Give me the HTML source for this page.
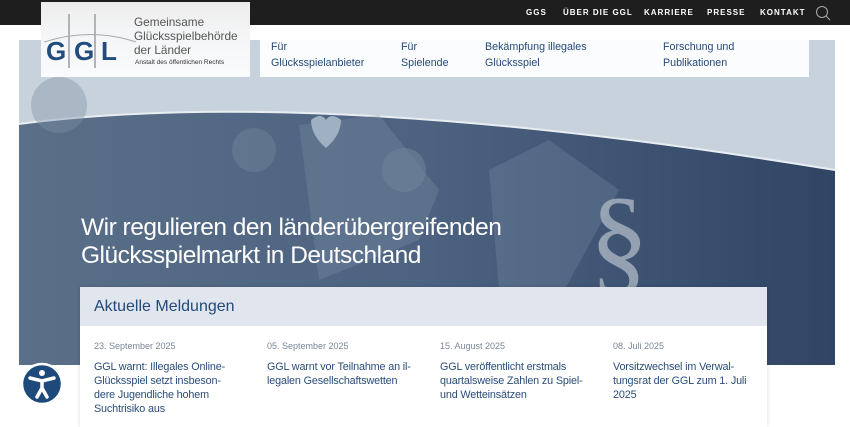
<!DOCTYPE html>
<html><head><meta charset="utf-8"><style>
*{margin:0;padding:0;box-sizing:border-box}
body{width:850px;height:422px;overflow:hidden;background:#fff;font-family:"Liberation Sans",sans-serif;position:relative}
.top{position:absolute;left:0;top:0;width:850px;height:25px;background:#1e1e1e}
.top span{position:absolute;top:8px;color:#fff;font-size:8px;font-weight:bold;letter-spacing:1px}
.hero{position:absolute;left:19px;top:40px;width:816px;height:325px;overflow:hidden;background:#c8d2dc}
.logo{position:absolute;left:41px;top:2px;width:209px;height:75px;background:linear-gradient(#ececec,#f4f5f6 40%,#fafbfc)}
.nav{position:absolute;left:260px;top:40px;width:549px;height:37px;background:#fbfcfd}
.nav div{position:absolute;top:0;color:#234a78;font-size:10.7px;line-height:15.5px;white-space:nowrap}
.card{position:absolute;left:80px;top:287px;width:687px;height:140px;background:#fff;box-shadow:0 0 4px rgba(0,0,0,.15)}
.card h2{height:39px;background:#e1e6ee;color:#234a78;font-size:16px;font-weight:normal;padding:11px 0 0 14px}
.col{position:absolute;top:54px;width:160px;white-space:nowrap}
.d{color:#7a8799;font-size:9px}
.t{color:#2a4d7a;font-size:10.8px;line-height:14px;margin-top:9px;letter-spacing:-.15px}
.h1{position:absolute;left:81px;top:214px;color:#fff;font-size:24.5px;line-height:28px;letter-spacing:-.5px;white-space:nowrap}
</style></head><body>
<div class="top">
<span style="left:526px">GGS</span><span style="left:563px">ÜBER DIE GGL</span><span style="left:644px">KARRIERE</span><span style="left:707px">PRESSE</span><span style="left:760px">KONTAKT</span>
<svg style="position:absolute;left:815px;top:5px" width="16" height="16"><circle cx="7" cy="7" r="5.5" fill="none" stroke="#aaa" stroke-width="1"/><line x1="11" y1="11" x2="15" y2="15" stroke="#aaa"/></svg>
</div>
<div class="hero">
<svg width="816" height="325" style="position:absolute;left:0;top:0">
<defs><linearGradient id="g" x1="0" x2="1"><stop offset="0" stop-color="#5a6f88"/><stop offset=".5" stop-color="#4c6280"/><stop offset="1" stop-color="#2f4563"/></linearGradient></defs>
<path d="M0 84 Q300 45 816 130 L816 325 L0 325Z" fill="url(#g)"/>
<path d="M0 84 Q300 45 816 130" fill="none" stroke="#e8edf2" stroke-width="2"/>
<path d="M280 85 L360 75 L420 150 L400 200 L300 240Z" fill="#8294aa" opacity=".3"/>
<path d="M292 80 q10-8 15 0 q5-8 15 0 q0 15 -15 28 q-15-13-15-28z" fill="#9fb0c3"/>
<circle cx="385" cy="130" r="22" fill="#6f8299" opacity=".6"/>
<circle cx="235" cy="110" r="22" fill="#6f8299" opacity=".5"/>
<circle cx="40" cy="65" r="28" fill="#7e90a6" opacity=".4"/>
<path d="M470 130 L530 100 L600 150 L540 260 L480 250Z" fill="#7c8fa6" opacity=".3"/>
<text x="570" y="240" font-size="120" font-family="Liberation Serif" fill="#a9b5c2" opacity=".8">§</text>
</svg>
</div>
<div class="logo">
<svg width="100" height="75" style="position:absolute;left:0;top:0">
<path d="M3 40 Q50 25 95 40" fill="none" stroke="#aaa" stroke-width="1"/>
<rect x="27" y="12" width="2" height="54" fill="#b0b4b8"/><rect x="53" y="12" width="2" height="54" fill="#b0b4b8"/>
<text x="5" y="58" font-size="26" font-weight="bold" fill="#214c7d" font-family="Liberation Sans">G</text>
<text x="33" y="58" font-size="26" font-weight="bold" fill="#214c7d" font-family="Liberation Sans">G</text>
<text x="60" y="58" font-size="26" font-weight="bold" fill="#214c7d" font-family="Liberation Sans">L</text>
</svg>
<div style="position:absolute;left:93px;top:13px;color:#555;font-size:11.8px;line-height:14px;white-space:nowrap">Gemeinsame<br>Glücksspielbehörde<br>der Länder</div>
<div style="position:absolute;left:94px;top:57px;color:#333;font-size:6.5px">Anstalt des öffentlichen Rechts</div>
</div>
<div class="nav">
<div style="left:11px;top:0">Für<br>Glücksspielanbieter</div>
<div style="left:141px">Für<br>Spielende</div>
<div style="left:225px">Bekämpfung illegales<br>Glücksspiel</div>
<div style="left:403px">Forschung und<br>Publikationen</div>
</div>
<div class="h1">Wir regulieren den länderübergreifenden<br>Glücksspielmarkt in Deutschland</div>
<div class="card"><h2>Aktuelle Meldungen</h2>
<div class="col" style="left:14px"><div class="d">23. September 2025</div><div class="t">GGL warnt: Illegales Online-<br>Glücksspiel setzt insbeson-<br>dere Jugendliche hohem<br>Suchtrisiko aus</div></div>
<div class="col" style="left:187px"><div class="d">05. September 2025</div><div class="t">GGL warnt vor Teilnahme an il-<br>legalen Gesellschaftswetten</div></div>
<div class="col" style="left:360px"><div class="d">15. August 2025</div><div class="t">GGL veröffentlicht erstmals<br>quartalsweise Zahlen zu Spiel-<br>und Wetteinsätzen</div></div>
<div class="col" style="left:533px"><div class="d">08. Juli 2025</div><div class="t">Vorsitzwechsel im Verwal-<br>tungsrat der GGL zum 1. Juli<br>2025</div></div>
</div>
<svg style="position:absolute;left:20px;top:362px" width="44" height="44">
<circle cx="22" cy="22" r="20" fill="#1d4a7a" stroke="#fff" stroke-width="2.5"/>
<circle cx="22" cy="11" r="3" fill="#fff"/>
<path d="M10 16 L22 19 L34 16 M22 19 L22 26 L17 35 M22 26 L27 35" fill="none" stroke="#fff" stroke-width="3.5" stroke-linecap="round"/>
</svg>
</body></html>
